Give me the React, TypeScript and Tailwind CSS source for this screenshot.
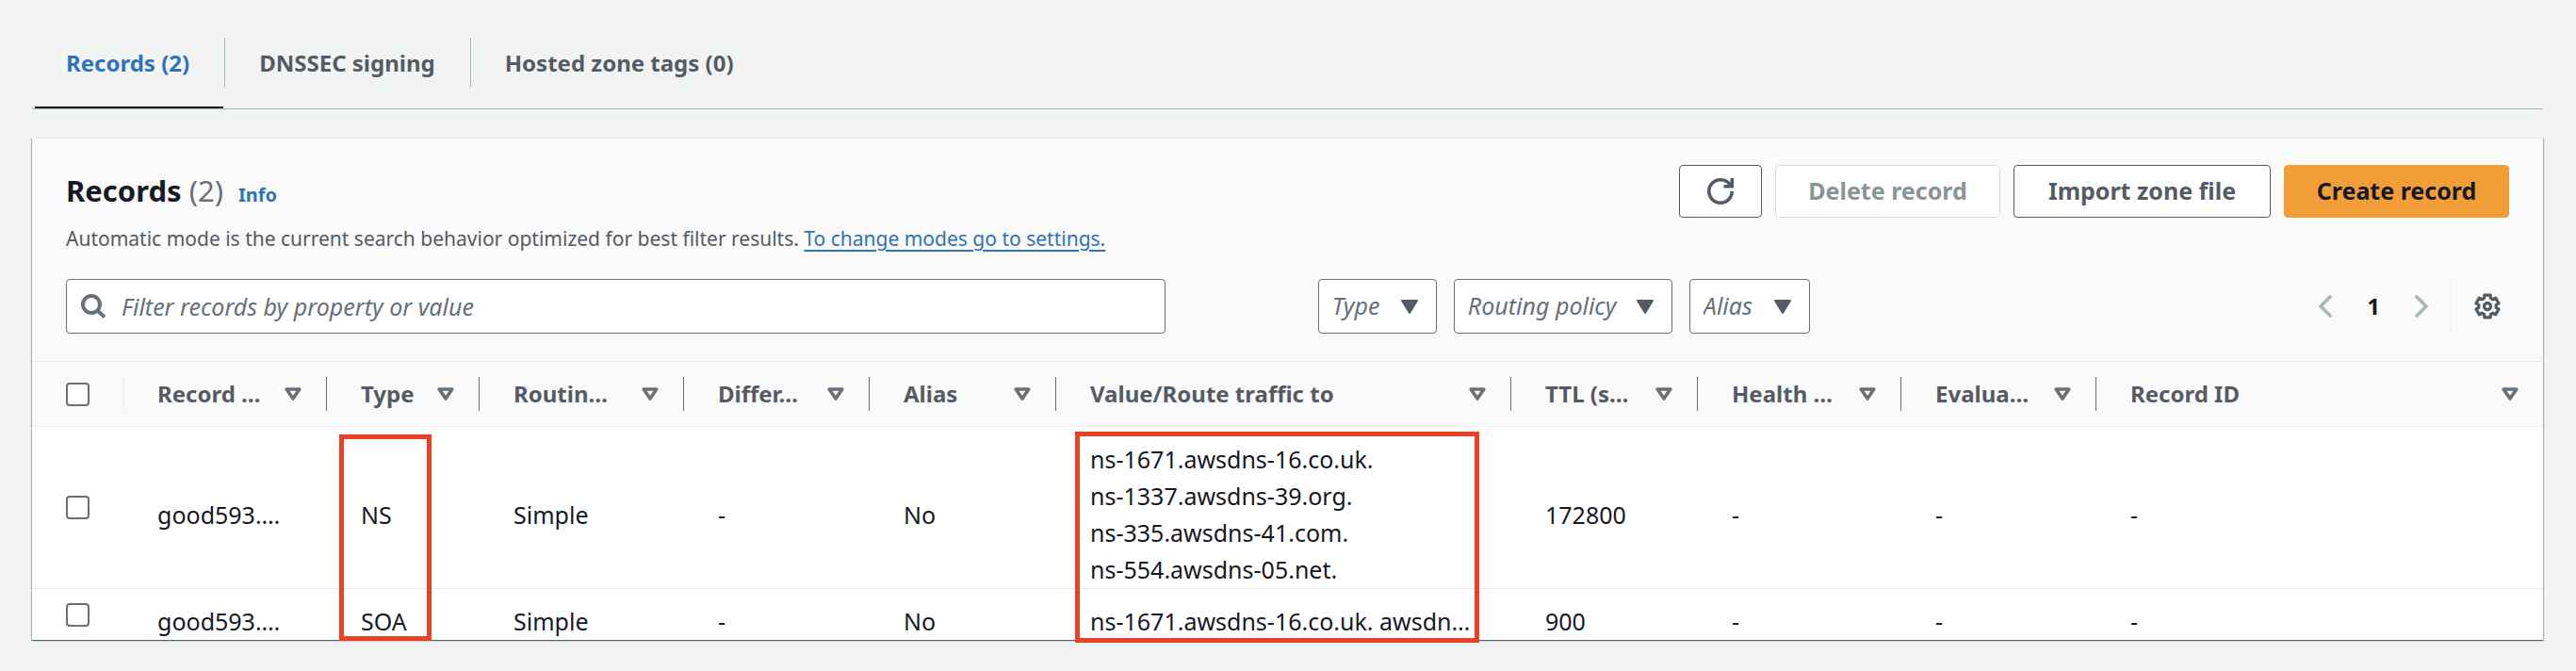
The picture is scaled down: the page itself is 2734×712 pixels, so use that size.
import type { ReactNode } from "react";

type Column = { label: string; width: string };

const columns: Column[] = [
  { label: "Record …", width: "w-[216px]" },
  { label: "Type", width: "w-[162px]" },
  { label: "Routin…", width: "w-[217px]" },
  { label: "Differ…", width: "w-[197px]" },
  { label: "Alias", width: "w-[198px]" },
  { label: "Value/Route traffic to", width: "w-[483px]" },
  { label: "TTL (s…", width: "w-[198px]" },
  { label: "Health …", width: "w-[216px]" },
  { label: "Evalua…", width: "w-[207px]" },
  { label: "Record ID", width: "w-auto" },
];

type RecordRow = { id: string; cells: (string | string[])[] };

const rows: RecordRow[] = [
  {
    id: "ns",
    cells: [
      "good593.…",
      "NS",
      "Simple",
      "-",
      "No",
      [
        "ns-1671.awsdns-16.co.uk.",
        "ns-1337.awsdns-39.org.",
        "ns-335.awsdns-41.com.",
        "ns-554.awsdns-05.net.",
      ],
      "172800",
      "-",
      "-",
      "-",
    ],
  },
  {
    id: "soa",
    cells: ["good593.…", "SOA", "Simple", "-", "No", "ns-1671.awsdns-16.co.uk. awsdn…", "900", "-", "-", "-"],
  },
];

const tabs = ["Records (2)", "DNSSEC signing", "Hosted zone tags (0)"];

function gearPath() {
  const points: string[] = [];
  for (let tooth = 0; tooth < 6; tooth++) {
    const base = -90 + tooth * 60;
    const corners: [number, number][] = [
      [8, -21],
      [10.6, -15],
      [10.6, 15],
      [8, 21],
    ];
    for (const [radius, offset] of corners) {
      const angle = ((base + offset) * Math.PI) / 180;
      points.push(`${(12 + radius * Math.cos(angle)).toFixed(2)} ${(12 + radius * Math.sin(angle)).toFixed(2)}`);
    }
  }
  return `M${points.join("L")}Z`;
}

function GearIcon() {
  return (
    <svg viewBox="0 0 24 24" className="size-7" fill="none" stroke="currentColor" strokeWidth="2.8" strokeLinejoin="round" aria-hidden="true">
      <path d={gearPath()} />
      <circle cx="12" cy="12" r="3" />
    </svg>
  );
}

function RefreshIcon() {
  return (
    <svg viewBox="0 0 16 16" className="size-7 overflow-visible" fill="none" stroke="currentColor" strokeWidth="2" aria-hidden="true">
      <path d="M10 5h5V0" />
      <path d="M15 8a7 7 0 1 1-7-7 6.87 6.87 0 0 1 6.3 4" />
    </svg>
  );
}

function SearchIcon() {
  return (
    <svg viewBox="0 0 26 26" className="pointer-events-none absolute left-4 size-[26px] text-[#687078]" fill="none" stroke="currentColor" strokeWidth="4" aria-hidden="true">
      <circle cx="11" cy="11" r="9" />
      <path d="M17 17l8 7.5" />
    </svg>
  );
}

function Chevron({ d }: { d: string }) {
  return (
    <svg viewBox="0 0 14 24" className="h-6 w-[14px]" fill="none" stroke="currentColor" strokeWidth="3.6" strokeLinecap="round" aria-hidden="true">
      <path d={d} />
    </svg>
  );
}

function SortIcon() {
  return (
    <svg viewBox="0 0 18 14" className="h-[14px] w-[18px] shrink-0 text-[#687078]" fill="none" stroke="currentColor" strokeWidth="3.6" strokeLinejoin="round" aria-hidden="true">
      <path d="M2.2 2h13.6L9 12z" />
    </svg>
  );
}

function FilterSelect({ label, width }: { label: string; width: string }) {
  return (
    <div className={`relative flex items-center ${width}`}>
      <select
        aria-label={label}
        className="h-[58px] w-full appearance-none rounded-[4px] border border-[#687078] bg-white pl-[14px] text-[25px] text-[#687078] italic"
      >
        <option>{label}</option>
      </select>
      <svg viewBox="0 0 18 15" className="pointer-events-none absolute right-5 h-[15px] w-[18px] text-[#545b64]" fill="currentColor" stroke="currentColor" strokeWidth="2" strokeLinejoin="round" aria-hidden="true">
        <path d="M1 1h16L9 14z" />
      </svg>
    </div>
  );
}

function ActionButton({ children, className, disabled }: { children: ReactNode; className: string; disabled?: boolean }) {
  return (
    <button
      type="button"
      disabled={disabled}
      className={`flex h-14 items-center justify-center rounded-[4px] border text-[25px] font-bold whitespace-nowrap ${className}`}
    >
      {children}
    </button>
  );
}

function Checkbox({ label }: { label: string }) {
  return (
    <input
      type="checkbox"
      aria-label={label}
      className="block size-[25px] appearance-none rounded-[4px] border-2 border-[#687078] bg-white"
    />
  );
}

export default function App() {
  return (
    <main className="min-h-screen bg-[#f2f4f4] pr-[35px] pl-[34px] font-['Noto_Sans',sans-serif] text-[#16191f]">
      <nav aria-label="Hosted zone sections" className="flex border-b border-[#aab7b8] pt-10 text-[24px] leading-[53px] font-bold">
        {tabs.map((tab, index) => (
          <div key={tab} className="relative pb-[22px]">
            <a
              href={`#tab-${index}`}
              aria-current={index === 0 ? "page" : undefined}
              className={`block pr-[37px] pl-9 ${index === 0 ? "text-[#2e73b8]" : "border-l border-[#aab7b8] text-[#545b64]"}`}
            >
              {tab}
            </a>
            {index === 0 && <span className="absolute right-[1px] bottom-0 left-[3px] h-[2px] bg-[#16191f]" />}
          </div>
        ))}
      </nav>

      <section className="relative mt-[30px] border-t border-[#eaeded] bg-white shadow-[0_1px_1px_0_rgba(0,28,36,0.4),1px_1px_1px_0_rgba(0,28,36,0.25),-1px_1px_1px_0_rgba(0,28,36,0.25)]">
        <header className="bg-[#fafafa] px-9 pt-7 pb-[29px]">
          <div className="flex items-start justify-between">
            <div>
              <div className="flex h-[54px] items-baseline leading-[54px]">
                <h2 className="text-[31px] font-bold">
                  Records <span className="font-normal text-[#687078]">(2)</span>
                </h2>
                <a href="#info" className="ml-4 text-[20px] font-bold text-[#2e73b8]">
                  Info
                </a>
              </div>
              <p className="text-[21px] leading-[48px] text-[#545b64]">
                Automatic mode is the current search behavior optimized for best filter results.{" "}
                <a href="#settings" className="text-[#2e73b8] underline decoration-2 underline-offset-4">
                  To change modes go to settings.
                </a>
              </p>
            </div>
            <div className="flex gap-[14px]">
              <button
                type="button"
                aria-label="Refresh"
                className="flex h-14 w-[88px] items-center justify-center rounded-[4px] border border-[#545b64] bg-white text-[#545b64]"
              >
                <RefreshIcon />
              </button>
              <ActionButton disabled className="w-[239px] border-[#d5dbdb] bg-white text-[#879596]">
                Delete record
              </ActionButton>
              <ActionButton className="w-[273px] border-[#545b64] bg-white text-[#545b64]">Import zone file</ActionButton>
              <ActionButton className="w-[239px] border-[#f19e39] bg-[#f19e39] text-[#16191f]">Create record</ActionButton>
            </div>
          </div>

          <div className="mt-[19px] flex items-center">
            <div className="relative flex w-[45%] items-center">
              <SearchIcon />
              <input
                type="search"
                aria-label="Filter records"
                placeholder="Filter records by property or value"
                className="h-[58px] w-full rounded-[4px] border border-[#687078] bg-white pl-[58px] text-[25px] placeholder:text-[#687078] placeholder:italic"
              />
            </div>
            <div className="ml-[162px] flex gap-[18px]">
              <FilterSelect label="Type" width="w-[126px]" />
              <FilterSelect label="Routing policy" width="w-[232px]" />
              <FilterSelect label="Alias" width="w-[128px]" />
            </div>
            <div className="ml-auto flex h-14 items-center">
              <button type="button" aria-label="Previous page" className="text-[#aab7b8]">
                <Chevron d="M12 2L2 12l10 10" />
              </button>
              <button type="button" aria-current="page" className="w-[88px] text-center text-[24px] font-bold">
                1
              </button>
              <button type="button" aria-label="Next page" className="text-[#aab7b8]">
                <Chevron d="M2 2l10 10L2 22" />
              </button>
              <div className="ml-6 flex h-full items-center border-l border-[#eaeded] pr-[9px] pl-6">
                <button type="button" aria-label="Preferences" className="text-[#545b64]">
                  <GearIcon />
                </button>
              </div>
            </div>
          </div>
        </header>

        <table className="w-full table-fixed border-separate border-spacing-0 text-left whitespace-nowrap">
          <thead className="bg-[#fafafa] text-[24px] text-[#545b64]">
            <tr>
              <th scope="col" className="h-[70px] w-[97px] border-y border-[#eaeded] p-0">
                <div className="flex h-9 items-center border-r border-[#eaeded] pl-9">
                  <Checkbox label="Select all records" />
                </div>
              </th>
              {columns.map((column, index) => (
                <th key={column.label} scope="col" className={`h-[70px] border-y border-[#eaeded] p-0 ${column.width}`}>
                  <div
                    className={`flex h-9 items-center justify-between pr-[26px] pl-9 ${
                      index < columns.length - 1 ? "border-r border-[#687078]" : ""
                    }`}
                  >
                    <span>{column.label}</span>
                    <SortIcon />
                  </div>
                </th>
              ))}
            </tr>
          </thead>
          <tbody className="text-[25px] leading-[39px]">
            {rows.map((row, rowIndex) => {
              const border = rowIndex < rows.length - 1 ? "border-b border-[#eaeded]" : "";
              return (
                <tr key={row.id}>
                  <td className={`p-0 pl-9 align-middle ${border}`}>
                    <Checkbox label={`Select ${row.id} record`} />
                  </td>
                  {row.cells.map((cell, index) => (
                    <td key={columns[index].label} className={`pt-[15px] pr-0 pb-0 pl-9 align-middle ${border}`}>
                      {Array.isArray(cell) ? cell.map((line) => <div key={line}>{line}</div>) : cell}
                    </td>
                  ))}
                </tr>
              );
            })}
          </tbody>
        </table>

        <div className="pointer-events-none absolute top-[314px] left-[326px] h-[219px] w-[98px] border-5 border-[#eb4026]" />
        <div className="pointer-events-none absolute top-[311px] left-[1107px] h-[224px] w-[429px] border-5 border-[#eb4026]" />
      </section>
    </main>
  );
}
